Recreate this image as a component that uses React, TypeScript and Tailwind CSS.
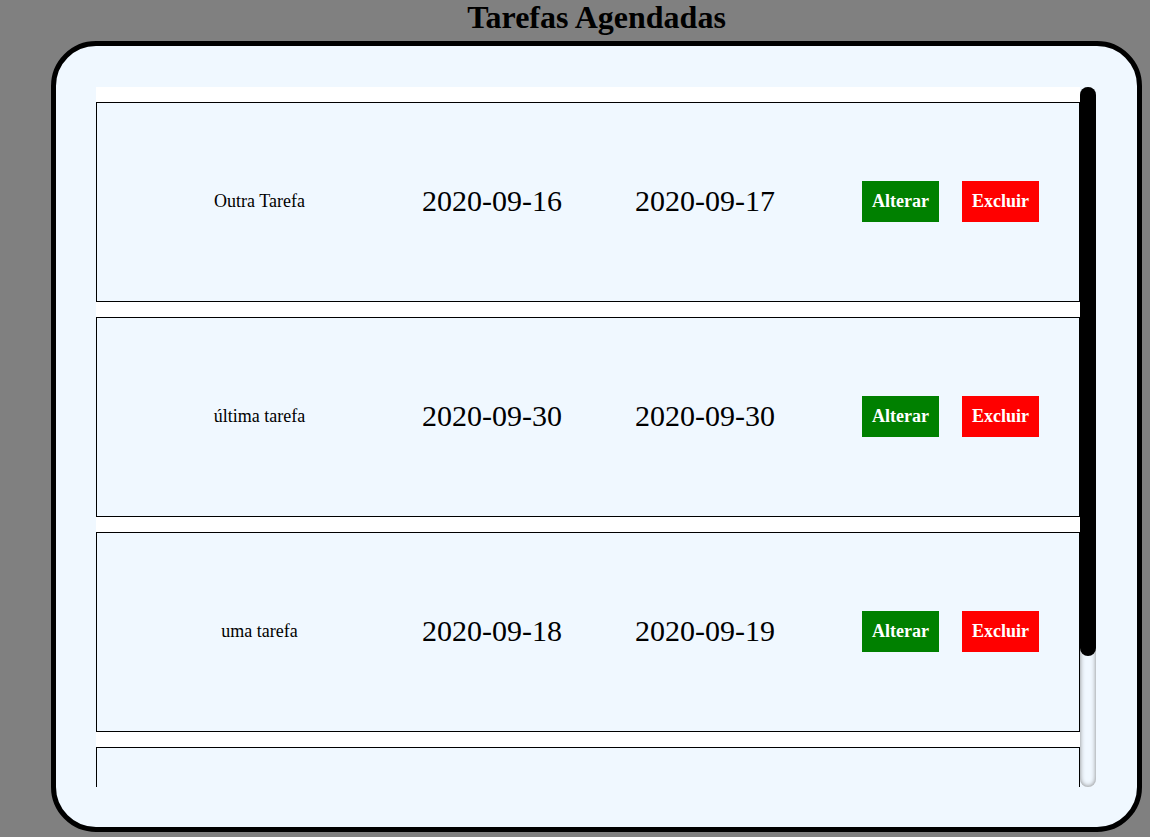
import React from "react";

const tasks = [
  { name: "Outra Tarefa", start: "2020-09-16", end: "2020-09-17" },
  { name: "última tarefa", start: "2020-09-30", end: "2020-09-30" },
  { name: "uma tarefa", start: "2020-09-18", end: "2020-09-19" },
];

function Row({ name, start, end }: { name: string; start: string; end: string }) {
  return (
    <div className="h-[200px] shrink-0 border border-black bg-[#f0f8ff] flex items-center pb-[2px]">
      <div className="w-[325px] text-center text-[18px] leading-normal">{name}</div>
      <div className="w-[140px] text-center text-[30px] leading-none whitespace-nowrap">{start}</div>
      <div className="ml-[73px] w-[140px] text-center text-[30px] leading-none whitespace-nowrap">{end}</div>
      <button className="ml-[87px] w-[77px] h-[41px] bg-[#008000] text-white font-bold text-[18px]">
        Alterar
      </button>
      <button className="ml-[23px] w-[77px] h-[41px] bg-[#ff0000] text-white font-bold text-[18px]">
        Excluir
      </button>
    </div>
  );
}

export default function App() {
  return (
    <div className="h-[837px] bg-[#808080] font-['Liberation_Serif',serif] text-black overflow-hidden">
      <div className="w-[1091px] ml-[51px]">
        <h1 className="text-[32px] font-bold leading-[35px] text-center">Tarefas Agendadas</h1>
        <div className="mt-[6px] border-[5px] border-black rounded-[45px] bg-[#f0f8ff] pt-[41px] pb-[40px] pl-[40px] pr-[41px]">
          <div className="h-[700px] flex">
            <div className="w-[984px] h-[700px] overflow-hidden bg-white flex flex-col gap-[15px] pt-[15px]">
              {tasks.map((t) => (
                <Row key={t.name} {...t} />
              ))}
              <div className="h-[200px] shrink-0 border border-black bg-[#f0f8ff]" />
            </div>
            <div className="w-[16px] h-[700px] rounded-[8px] shadow-[inset_0_0_5px_grey]">
              <div className="h-[569px] rounded-[8px] bg-black" />
            </div>
          </div>
        </div>
      </div>
    </div>
  );
}
